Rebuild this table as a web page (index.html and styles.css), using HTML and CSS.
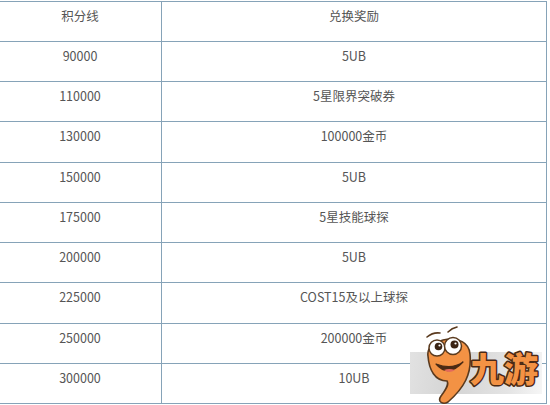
FILE: index.html
```html
<!DOCTYPE html>
<html lang="zh-CN">
<head>
<meta charset="utf-8">
<link rel="stylesheet" href="styles.css">
</head>
<body>
<div class="page">
  <div class="table">
    <div class="row r40 head"><div class="cell c1">积分线</div><div class="cell c2">兑换奖励</div></div>
    <div class="row r40"><div class="cell c1">90000</div><div class="cell c2">5UB</div></div>
    <div class="row r40"><div class="cell c1">110000</div><div class="cell c2">5星限界突破券</div></div>
    <div class="row r41"><div class="cell c1">130000</div><div class="cell c2">100000金币</div></div>
    <div class="row r40"><div class="cell c1">150000</div><div class="cell c2">5UB</div></div>
    <div class="row r40"><div class="cell c1">175000</div><div class="cell c2">5星技能球探</div></div>
    <div class="row r40"><div class="cell c1">200000</div><div class="cell c2">5UB</div></div>
    <div class="row r41"><div class="cell c1">225000</div><div class="cell c2">COST15及以上球探</div></div>
    <div class="row r40"><div class="cell c1">250000</div><div class="cell c2">200000金币</div></div>
    <div class="row r40"><div class="cell c1">300000</div><div class="cell c2">10UB</div></div>
  </div>
  <div class="logo-bg"></div>
  <svg class="logo" width="136" height="79" viewBox="0 0 136 79" xmlns="http://www.w3.org/2000/svg">
    <path d="M19 11 Q25 6 32 7" fill="none" stroke="#5a3a1e" stroke-width="1.6" stroke-linecap="round"/>
    <path d="M40 6 Q44 2 49 1" fill="none" stroke="#5a3a1e" stroke-width="1.6" stroke-linecap="round"/>
    <path d="M20 30 C17 12 60 4 62 28 C64 48 56 62 40 76 C35 79 29 76 33 70 C39 62 41 58 39 55 C27 55 21 44 20 30 Z" fill="#f39244" stroke="#5a3a1e" stroke-width="1.6"/>
    <circle cx="29" cy="22" r="8" fill="#fff" stroke="#5a3a1e" stroke-width="1.5"/>
    <circle cx="45" cy="20" r="8.5" fill="#fff" stroke="#5a3a1e" stroke-width="1.5"/>
    <circle cx="30.5" cy="20.5" r="3.8" fill="#3b2414"/>
    <circle cx="46.5" cy="18.5" r="4" fill="#3b2414"/>
    <circle cx="31.5" cy="19.5" r="1.1" fill="#fff"/>
    <circle cx="47.5" cy="17.5" r="1.1" fill="#fff"/>
    <path d="M28 38 Q40 52 55 36 Q44 44 28 38 Z" fill="#4a2a15" stroke="#4a2a15" stroke-width="1.2" stroke-linejoin="round"/>
    <path d="M36 44 Q41 48 47 44 Q41 42 36 44 Z" fill="#e36a5c"/>
    <text x="62" y="56" class="brand" textLength="68" lengthAdjust="spacingAndGlyphs">九游</text>
  </svg>
</div>
</body>
</html>
```
FILE: styles.css
```css
html, body {
  margin: 0;
  padding: 0;
  background: #ffffff;
}
.page {
  position: relative;
  width: 550px;
  height: 405px;
  overflow: hidden;
}
.table {
  margin: 1px 0 0 -1px;
  width: 547px;
  border-top: 1px solid #86a3b8;
  border-right: 1px solid #86a3b8;
  font-family: "Noto Sans CJK SC", "Noto Sans", sans-serif;
  font-size: 12.5px;
  color: #555555;
}
.row {
  display: grid;
  grid-template-columns: 163px 1fr;
  border-bottom: 1px solid #86a3b8;
  box-sizing: border-box;
}
.r40 { height: 40px; }
.r41 { height: 41px; }
.head { height: 40px; }
.cell {
  text-align: center;
  line-height: 20px;
  padding-top: 4px;
}
.c1 {
  border-right: 1px solid #86a3b8;
}
.logo-bg {
  position: absolute;
  left: 410px;
  top: 352px;
  width: 132px;
  height: 42px;
  background: linear-gradient(100deg, #e2e2e2 0%, #d4d4d4 35%, #e4e4e4 75%, #f6f6f6 100%);
}
.logo {
  position: absolute;
  left: 408px;
  top: 326px;
}
.brand {
  font-family: "Noto Sans CJK SC", sans-serif;
  font-weight: 900;
  font-size: 34px;
  fill: #f39244;
  stroke: #4a2a15;
  stroke-width: 3px;
  paint-order: stroke;
  stroke-linejoin: round;
}
```
